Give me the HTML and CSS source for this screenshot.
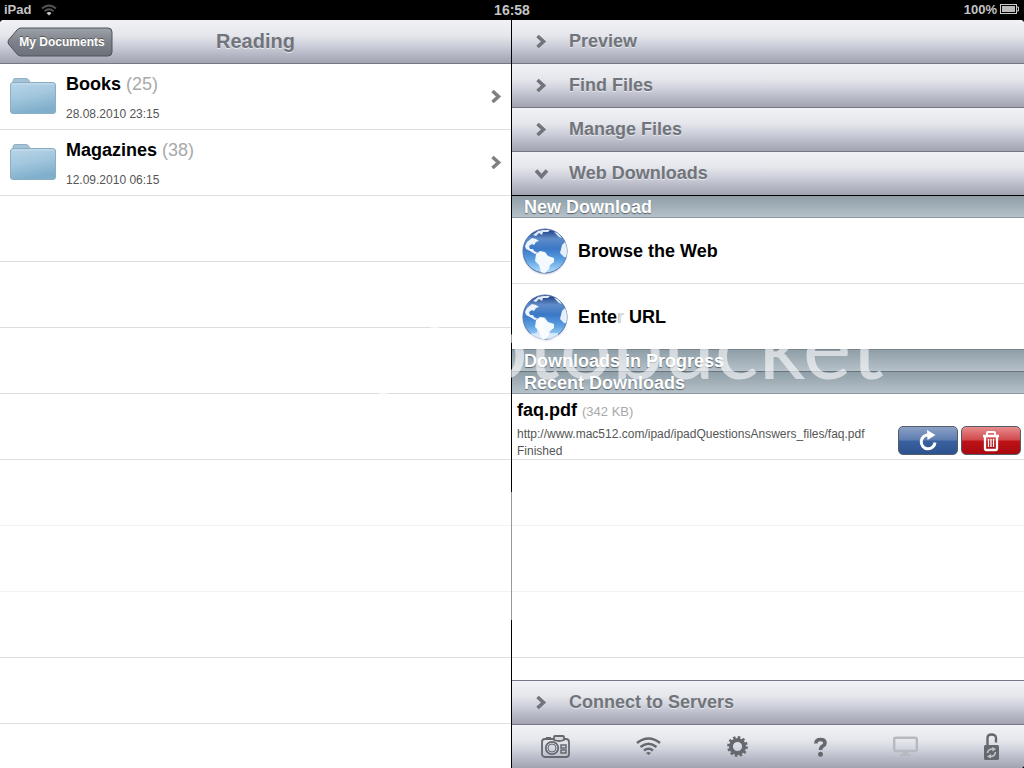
FILE: index.html
```
<!DOCTYPE html>
<html lang="en">
<head>
<meta charset="utf-8">
<title>Reading</title>
<link rel="stylesheet" href="styles.css">
</head>
<body>
<svg class="defs" aria-hidden="true">
  <defs>
    <linearGradient id="folderFill" x1="0" y1="0" x2="0.3" y2="1"><stop offset="0" stop-color="#b9d5e7"/><stop offset="0.5" stop-color="#a3c7de"/><stop offset="1" stop-color="#80afcb"/></linearGradient>
    <linearGradient id="sea" x1="0" y1="0" x2="0" y2="1"><stop offset="0" stop-color="#1b3580"/><stop offset="0.22" stop-color="#5f8cc8"/><stop offset="0.45" stop-color="#3b78c6"/><stop offset="0.7" stop-color="#5a9fe2"/><stop offset="1" stop-color="#b4e0fb"/></linearGradient>
    <radialGradient id="shade"><stop offset="0.85" stop-color="#8796ad" stop-opacity="0.7"/><stop offset="1" stop-color="#fff" stop-opacity="0"/></radialGradient>
    <clipPath id="disc"><circle cx="24" cy="24" r="22"/></clipPath>
  </defs>
  <symbol id="folder" viewBox="0 0 48 40">
    <path d="M4 8V4Q4 1.500 6 1.500H17Q19 1.500 20 3.500L21 5.500H43V10H4Z" fill="#a5c3d6" stroke="#91b0c4"/>
    <rect x="1.500" y="5.500" width="45" height="31" rx="2.500" fill="url(#folderFill)" stroke="#8aaec4"/>
    <path d="M3 7H45" stroke="#c8deeb"/>
  </symbol>
  <symbol id="globe" viewBox="0 0 48 50">
    <circle cx="24" cy="25.500" r="24" fill="url(#shade)"/>
    <circle cx="24" cy="24" r="22" fill="url(#sea)" stroke="#5a76ad"/>
    <g clip-path="url(#disc)">
      <path d="M12 8L17 4L22 3L29 3L27 5L22 5L21 8L18 6L15 9Z" fill="#dfeaf6"/>
      <path d="M4 19L6 15L11 11L15 12L18 14L15 15L13 18L11 17L8 19L9 22L12 22L13 24L17 26L14 27L9 24L5 22Z" fill="#edf4fb"/>
      <path d="M15 27L19 24L24 25L27 29L33 31L33 35L29 38L28 42L23 47L20 45L18 38L14 34Z" fill="#f3f9fe"/>
      <path d="M41 18L44 15L48 18V31L43 30L39 26Z" fill="#e5f0fa"/>
      <path d="M33 5L37 6L41 11L38 10Z" fill="#dbeaf8"/>
    </g>
  </symbol>
  <symbol id="chevron" viewBox="0 0 12 16"><path d="M2.500 2L8.500 7.500L2.500 13" fill="none" stroke="currentColor" stroke-width="3.600"/></symbol>
</svg>

<div class="screen">
  <header class="status">
    <div class="status-left">iPad
      <svg width="16" height="12" viewBox="0 0 16 12"><g fill="none" stroke="#555" stroke-width="1.800"><path d="M1 4.500Q8 -1.500 15 4.500"/><path d="M3.500 7.200Q8 3.200 12.500 7.200"/></g><path d="M5.500 9Q8 7 10.500 9L8 11.500Z" fill="#ccc"/></svg>
    </div>
    <time class="clock">16:58</time>
    <div class="status-right">100%
      <svg width="20" height="11" viewBox="0 0 20 11"><rect x="0.500" y="0.500" width="16" height="9" fill="none" stroke="#ccc"/><rect x="2" y="2" width="13" height="6" fill="#bbb"/><path d="M17 3H18.500V7H17" fill="none" stroke="#ccc"/></svg>
    </div>
  </header>

  <main class="panes">
    <section class="pane files">
      <div class="bar nav">
        <button class="back" type="button"><svg viewBox="0 0 106 30" width="106" height="30" aria-hidden="true"><defs><linearGradient id="backFill" x1="0" y1="0" x2="0" y2="1"><stop offset="0" stop-color="#9fa2a9"/><stop offset="0.500" stop-color="#7d8189"/><stop offset="1" stop-color="#6c7079"/></linearGradient></defs><path d="M14 1H101Q105 1 105 5V25Q105 29 101 29H14Q11.500 29 10 27L1.500 17Q0.500 15 1.500 13L10 3Q11.500 1 14 1Z" fill="url(#backFill)" stroke="#50545c"/></svg><span>My Documents</span></button>
        <h1>Reading</h1>
      </div>
      <div class="list">
        <a class="row folder-row" href="#books">
          <svg class="folder" width="48" height="40"><use href="#folder"/></svg>
          <div class="info"><strong>Books <span>(25)</span></strong><small>28.08.2010 23:15</small></div>
          <svg class="go" width="12" height="16"><use href="#chevron"/></svg>
        </a>
        <a class="row folder-row" href="#magazines">
          <svg class="folder" width="48" height="40"><use href="#folder"/></svg>
          <div class="info"><strong>Magazines <span>(38)</span></strong><small>12.09.2010 06:15</small></div>
          <svg class="go" width="12" height="16"><use href="#chevron"/></svg>
        </a>
      </div>
    </section>

    <section class="pane tools">
      <button class="bar fold" type="button"><svg width="12" height="16"><use href="#chevron"/></svg>Preview</button>
      <button class="bar fold" type="button"><svg width="12" height="16"><use href="#chevron"/></svg>Find Files</button>
      <button class="bar fold" type="button"><svg width="12" height="16"><use href="#chevron"/></svg>Manage Files</button>
      <button class="bar fold open" type="button" aria-expanded="true"><svg width="12" height="16"><use href="#chevron"/></svg>Web Downloads</button>
      <div class="list downloads">
        <h2>New Download</h2>
        <a class="row web-row" href="#browse"><svg width="48" height="50"><use href="#globe"/></svg>Browse the Web</a>
        <a class="row web-row last" href="#url"><svg width="48" height="50"><use href="#globe"/></svg><span>Ente<span class="faded">r</span> URL</span></a>
        <h2 class="ruled">Downloads in Progress</h2>
        <h2>Recent Downloads</h2>
        <div class="row file-row">
          <div class="file">
            <strong>faq.pdf <span>(342 KB)</span></strong>
            <small>http://www.mac512.com/ipad/ipadQuestionsAnswers_files/faq.pdf</small>
            <small>Finished</small>
          </div>
          <button class="action reload" type="button" aria-label="Download again"><svg width="20" height="22" viewBox="0 0 20 22"><path d="M10.500 5A6.900 6.900 0 1 0 17 12.500" fill="none" stroke="#fff" stroke-width="3"/><path d="M9 0L17.500 5L9.500 10Z" fill="#fff"/></svg></button>
          <button class="action delete" type="button" aria-label="Delete"><svg width="18" height="22" viewBox="0 0 18 22" fill="none" stroke="#fff" stroke-width="2"><path d="M5 5.500V3Q5 2 6 2H12Q13 2 13 3V5.500"/><path d="M1 6H17M3 7V19Q3 20 4 20H14Q15 20 15 19V7" stroke-width="2.300"/><path d="M6.500 9V17M9 9V17M11.500 9V17" stroke-width="1.300"/></svg></button>
        </div>
      </div>
      <button class="bar fold bottom" type="button"><svg width="12" height="16"><use href="#chevron"/></svg>Connect to Servers</button>
      <nav class="bar toolbar">
        <button type="button" aria-label="Camera"><svg width="29" height="23" viewBox="0 0 29 23" fill="none" stroke="currentColor" stroke-width="1.800"><rect x="1" y="4" width="27" height="18" rx="3"/><path d="M5 3.500H10" stroke-width="3"/><path d="M13 5V2Q13 1 14 1H22Q23 1 23 2V5Q18 7 13 5Z" fill="#d8d9e0"/><circle cx="11" cy="13" r="6.200"/><circle cx="11" cy="13" r="4" stroke-width="1"/><rect x="20" y="10" width="5" height="3" stroke-width="1.500"/><rect x="20" y="15" width="5" height="3" stroke-width="1.500"/></svg></button>
        <button type="button" aria-label="Wi-Fi"><svg width="25" height="20" viewBox="0 0 25 20" fill="none" stroke="currentColor" stroke-width="2.600"><path d="M1 6Q12.500 -3 24 6M4.500 10Q12.500 3.500 20.500 10M8 13.500Q12.500 10 17 13.500"/><path d="M10 16Q12.500 14 15 16L12.500 18Z" fill="currentColor" stroke="none"/></svg></button>
        <button type="button" aria-label="Settings"><svg width="21" height="21" viewBox="0 0 21 21" fill="none" stroke="currentColor"><circle cx="10.500" cy="10.500" r="6.600" stroke-width="4"/><circle cx="10.500" cy="10.500" r="9" stroke-width="2.800" stroke-dasharray="2.500 2.212"/></svg></button>
        <button type="button" aria-label="Help"><svg width="13" height="20" viewBox="0 0 13 20"><path d="M1.800 6.500Q2 2.500 6.500 2.500Q11 2.500 11 6Q11 7.800 8.800 9Q6.500 10.500 6.500 13" fill="none" stroke="currentColor" stroke-width="3.600"/><circle cx="6.500" cy="17.300" r="2.500" fill="currentColor"/></svg></button>
        <button class="disabled" type="button" aria-label="Display" disabled><svg width="25" height="21" viewBox="0 0 25 21"><rect x="1.200" y="1.700" width="22.600" height="13.300" rx="1.500" fill="none" stroke="currentColor" stroke-width="2.400"/><path d="M10 15H15V18H18V20H7V18H10Z" fill="currentColor"/></svg></button>
        <button type="button" aria-label="Unlock"><svg width="15" height="27" viewBox="0 0 15 27"><path d="M3.500 13V5Q3.500 1.500 7.500 1.500Q12 1.500 12 5V9.500" fill="none" stroke="currentColor" stroke-width="2.400"/><rect y="12" width="15" height="15" rx="1.500" fill="currentColor"/><g fill="none" stroke="#c5c7d0" stroke-width="1.600"><path d="M3.500 20Q4 16 8.500 16M11.500 19Q11 23.500 6.500 23.500"/></g><path d="M8 14L12 16L8.500 18.500ZM7 21L3 23.500L7 25.500Z" fill="#c5c7d0"/></svg></button>
      </nav>
    </section>
  </main>
  <div class="haze" aria-hidden="true"></div>
  <div class="watermark" aria-hidden="true">photobucket</div>
</div>
</body>
</html>
```
FILE: styles.css
```
* { box-sizing: border-box; }
body {
  margin: 0;
  background: #000;
  color: #000;
  font-family: "Liberation Sans", Arial, Helvetica, sans-serif;
}
a { color: inherit; text-decoration: none; }
button { font: inherit; color: inherit; border: 0; padding: 0; background: none; }
svg { display: block; flex: none; }
h1, h2 { margin: 0; }
.defs { position: absolute; width: 0; height: 0; }
.screen {
  position: relative;
  display: flex;
  flex-direction: column;
  min-height: 100vh;
  overflow: hidden;
}
.status {
  display: grid;
  grid-template-columns: 1fr auto 1fr;
  align-items: center;
  height: 20px;
  padding: 0 4px 1px;
  color: #c4c4c4;
  font-size: 13px;
  font-weight: bold;
}
.status-left, .status-right { display: flex; align-items: center; gap: 10px; }
.status-right { justify-content: flex-end; gap: 3px; }
.clock { font-size: 14px; }
.panes {
  flex: 1;
  display: grid;
  grid-template-columns: 1fr 1fr;
  border-radius: 4px 4px 4px 0;
  overflow: hidden;
}
.pane { display: flex; flex-direction: column; background: #fff; }
.files { border-right: 1px solid #000; }
.bar {
  flex: none;
  height: 44px;
  border-bottom: 1px solid #767985;
  background: linear-gradient(#f1f2f6, #e6e7ec 35%, #d2d4de 55%, #bbbdca 75%, #a1a3b1);
  color: #71757b;
  font-weight: bold;
  text-shadow: 0 1px 0 #e6e7ec;
}
.nav {
  display: grid;
  grid-template-columns: 1fr auto 1fr;
  align-items: center;
  padding: 0 7px;
}
.nav h1 { font-size: 20px; }
.back { display: grid; width: 106px; color: #fff; font-size: 12px; text-shadow: 0 -1px 0 #555; }
.back > * { grid-area: 1 / 1; align-self: center; }
.back span { padding-left: 4px; }
.list {
  flex: 1;
  background: repeating-linear-gradient(#fff 0, #fff 65px, #dedede 65px, #dedede 66px);
}
.row { display: flex; align-items: center; height: 66px; border-bottom: 1px solid #dedede; background: #fff; }
.folder-row { padding: 0 9px; gap: 9px; }
.info { flex: 1; display: flex; flex-direction: column; gap: 12px; }
.row strong { font-size: 18px; line-height: 22px; }
.row strong span { color: #a9a9a9; font-weight: normal; }
.row small { color: #555; font-size: 12px; line-height: 14px; }
.go { color: #808080; }
.fold { display: flex; align-items: center; gap: 22px; padding: 0 23px; text-align: left; font-size: 18px; }
.open { border-bottom-color: #000; }
.open svg { transform: rotate(90deg); }
.list h2 {
  height: 22px;
  padding-left: 12px;
  border-bottom: 1px solid #8b979f;
  background: linear-gradient(#8f9ea7, #b6c1c9);
  color: #fff;
  font-size: 18px;
  line-height: 22px;
  text-shadow: 0 1px 1px #56636c;
}
.list .ruled { border-bottom-color: #68757d; }
.downloads { background-position: 0 66px; }
.web-row { gap: 9px; padding: 2px 0 0 9px; font-size: 18px; font-weight: bold; }
.web-row.last { border-bottom-color: #77848c; }
.faded { color: #999; }
.file-row { gap: 3px; padding: 0 3px 0 5px; }
.file { flex: 1; display: flex; flex-direction: column; padding-top: 5px; }
.file strong { margin-bottom: 3px; }
.row.file-row strong span { font-size: 13px; }
.row.file-row small { line-height: 17px; }
.action {
  display: grid;
  place-items: center;
  align-self: flex-end;
  width: 60px;
  height: 29px;
  margin-bottom: 4px;
  border: 1px solid #555d6b;
  border-radius: 5px;
}
.reload { background: linear-gradient(#8ba1c6, #5d7db0 48%, #3a619f 52%, #2c538f); }
.delete { background: linear-gradient(#e88b8d, #d04a4d 48%, #bd1217 52%, #a90a0f); }
.bottom { border-top: 1px solid #767985; height: 45px; }
.toolbar { display: flex; align-items: center; justify-content: space-between; padding: 0 25px 0 29px; height: 43px; border: 0; }
.toolbar button { color: #65686d; }
.toolbar .disabled { color: #b7b9c0; }
.haze {
  position: absolute;
  top: 492px;
  right: 0;
  left: 0;
  height: 128px;
  background: #fff;
  opacity: 0.6;
  pointer-events: none;
}
.watermark {
  position: absolute;
  top: 291px;
  right: 140px;
  color: #fff;
  opacity: 0.6;
  font: 92px/106px Lato, sans-serif;
  pointer-events: none;
}
```
